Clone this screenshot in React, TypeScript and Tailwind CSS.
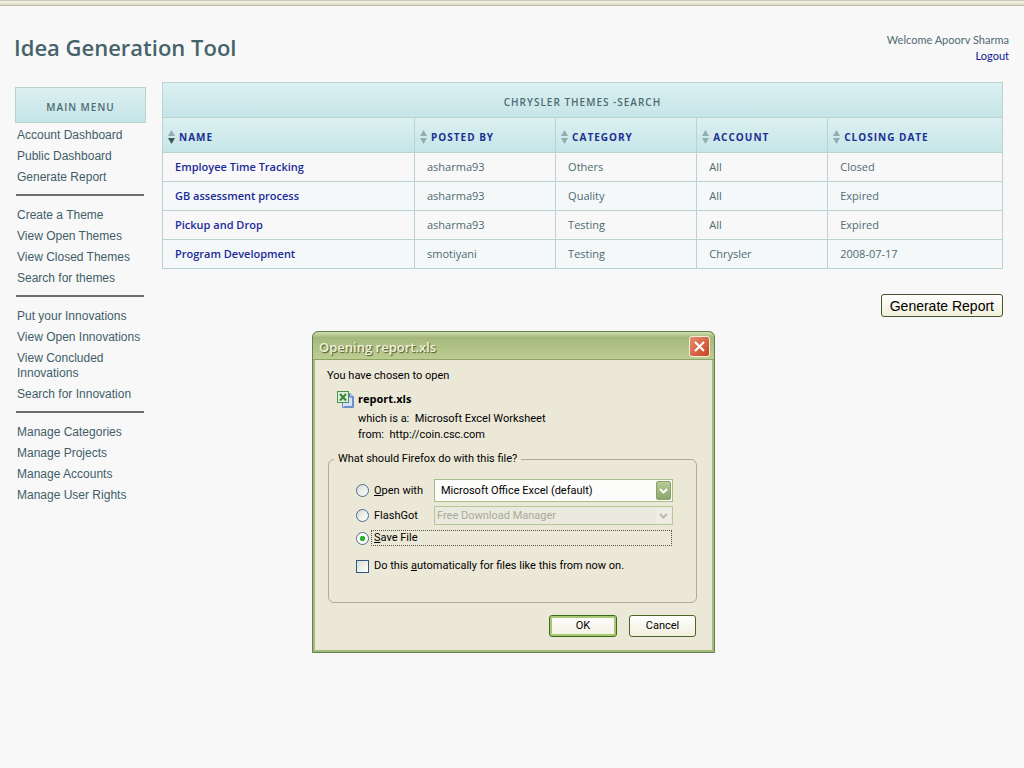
import React from "react";

const menuGroups: string[][] = [
  ["Account Dashboard", "Public Dashboard", "Generate Report"],
  ["Create a Theme", "View Open Themes", "View Closed Themes", "Search for themes"],
  ["Put your Innovations", "View Open Innovations", "View Concluded Innovations", "Search for Innovation"],
  ["Manage Categories", "Manage Projects", "Manage Accounts", "Manage User Rights"],
];

const columns = ["Name", "Posted by", "Category", "Account", "Closing date"];

const rows: string[][] = [
  ["Employee Time Tracking", "asharma93", "Others", "All", "Closed"],
  ["GB assessment process", "asharma93", "Quality", "All", "Expired"],
  ["Pickup and Drop", "asharma93", "Testing", "All", "Expired"],
  ["Program Development", "smotiyani", "Testing", "Chrysler", "2008-07-17"],
];

function SortIcon({ active }: { active: boolean }) {
  return (
    <svg width="7" height="14" viewBox="0 0 7 14" aria-hidden="true" className="shrink-0">
      <path d="M3.5 0 L7 6 H0 Z" fill="#93aeb0" />
      <path d="M0 8 H7 L3.5 14 Z" fill={active ? "#3f5555" : "#93aeb0"} />
    </svg>
  );
}

function Sidebar() {
  return (
    <nav className="mt-[5px] w-[131px] shrink-0 font-['Liberation_Sans',sans-serif]">
      <h2 className="mb-0.5 flex h-9 items-center justify-center border border-[#b5d3d3] bg-linear-to-b from-[#dcf0f1] to-[#c5e5e8] pt-1 font-['Open_Sans',sans-serif] text-[10px] leading-4 font-semibold tracking-widest text-[#4f6b72] uppercase">
        Main menu
      </h2>
      {menuGroups.map((group, i) => (
        <React.Fragment key={group[0]}>
          {i > 0 && <hr className="mt-1.5 mr-0.5 mb-[9px] ml-px border-0 border-t-2 border-[#6c6c72]" />}
          <ul>
            {group.map((item) => (
              <li key={item} className="px-0.5 py-[3px] text-xs leading-[15px] text-[#425d68]">
                <a href="#">{item}</a>
              </li>
            ))}
          </ul>
        </React.Fragment>
      ))}
    </nav>
  );
}

function ThemesTable() {
  return (
    <table className="w-full table-fixed border-collapse text-[11px] leading-4 text-[#4f6b72]">
      <colgroup>
        <col className="w-[30%]" />
        <col className="w-[16.8%]" />
        <col className="w-[16.8%]" />
        <col className="w-[15.6%]" />
        <col className="w-[20.8%]" />
      </colgroup>
      <thead className="text-[10px] tracking-widest uppercase">
        <tr className="h-[35px] bg-linear-to-b from-[#dcf0f1] to-[#c5e5e8]">
          <th colSpan={5} className="border border-[#b9d3d3] pt-1 text-center font-semibold">
            Chrysler Themes -Search
          </th>
        </tr>
        <tr className="h-[35px] bg-linear-to-b from-[#dcf0f1] to-[#c5e5e8]">
          {columns.map((name, i) => (
            <th key={name} className="border border-[#b9d3d3] px-[5px] pt-[3px] text-left">
              <button type="button" className="flex items-center gap-1 font-bold tracking-widest text-[#1b2f92] uppercase">
                <SortIcon active={i === 0} />
                {name}
              </button>
            </th>
          ))}
        </tr>
      </thead>
      <tbody>
        {rows.map((row) => (
          <tr key={row[0]} className="h-[29px] even:bg-[#f4f8f9]">
            {row.map((cell, i) => (
              <td key={i} className="border border-[#b9d3d3] px-3">
                {i === 0 ? (
                  <a href="#" className="font-semibold text-[#1a2a98]">{cell}</a>
                ) : (
                  cell
                )}
              </td>
            ))}
          </tr>
        ))}
      </tbody>
    </table>
  );
}

function ExcelIcon() {
  return (
    <svg width="17" height="17" viewBox="0 0 17 17" aria-hidden="true">
      <path d="M5.5 2.5 H13 L16.500 6 V16.500 H5.500 Z" fill="#d3e1fa" stroke="#6e8cc4" />
      <path d="M15.500 6 V15.500 H7" fill="none" stroke="#6f90d0" strokeWidth="1" />
      <path d="M12.500 2.500 V6 H16.500" fill="#a9c1ea" stroke="#5578bd" />
      <rect x="0.500" y="0.500" width="11" height="11" fill="#e0efd9" stroke="#4f9151" />
      <path d="M3 3 L9 9.500 M9 3 L3 9.500" stroke="#3d8441" strokeWidth="2" />
    </svg>
  );
}

const radioClass =
  "size-[13px] shrink-0 appearance-none rounded-full border border-[#4a6f92] bg-linear-to-br from-[#dcdcd5] to-white checked:bg-radial checked:from-[#2cb52c] checked:from-30% checked:to-white checked:to-40%";

function SaveDialog() {
  return (
    <section
      role="dialog"
      aria-labelledby="dialog-title"
      className="absolute top-[331px] left-1/2 flex w-[403px] -translate-x-[200px] flex-col rounded-t-md border border-[#64824d] bg-[#a4bb7c] px-[2px] pb-[2px] font-[Roboto,sans-serif] text-[11px] leading-4 text-black"
    >
      <header className="-mx-[2px] flex h-7 items-center justify-between rounded-t-md border-b border-[#8ba468] bg-linear-to-b from-[#d3dfb0] via-[#a5b87c] via-20% to-[#bdcd92] pt-0.5 pr-1 pl-1.5">
        <h2
          id="dialog-title"
          className="font-['Open_Sans',sans-serif] text-[13px] leading-5 font-semibold text-[#eff2dc] [text-shadow:1px_1px_1px_#4b5a30]"
        >
          Opening report.xls
        </h2>
        <button
          type="button"
          aria-label="Close"
          className="grid size-[21px] place-items-center rounded-[3px] border border-[#f6efe0] bg-linear-to-br from-[#e58d6c] to-[#c8401f]"
        >
          <svg width="13" height="13" viewBox="0 0 13 13" aria-hidden="true">
            <path d="M2 2 L11 11 M11 2 L2 11" stroke="#fff" strokeWidth="2" />
          </svg>
        </button>
      </header>

      <form className="bg-[#ebe8d7] px-3 pt-2 pb-[13px]" onSubmit={(e) => e.preventDefault()}>
        <p>You have chosen to open</p>
        <div className="flex gap-1 pt-[7px] pl-[10px]">
          <ExcelIcon />
          <div>
            <p className="font-['Open_Sans',sans-serif] font-bold">report.xls</p>
            <p className="mt-1">
              which is a:&nbsp; Microsoft Excel Worksheet
            </p>
            <p>
              from:&nbsp; http://coin.csc.com
            </p>
          </div>
        </div>

        <fieldset className="mt-2 mr-[3px] ml-px h-[152px] rounded-md border border-[#aeab9b] pl-[27px]">
          <legend className="-ml-[22px] px-1">What should Firefox do with this file?</legend>
          <div className="mt-3 flex h-[23px] items-center">
            <input id="open-with" type="radio" name="action" className={radioClass} />
            <label htmlFor="open-with" className="ml-[5px] w-[60px]">
              <u>O</u>pen with
            </label>
            <div className="relative w-[239px]">
              <select
                aria-label="Application"
                className="block h-[23px] w-full appearance-none border border-[#a9bd87] bg-[#fcfcfa] pl-1.5"
              >
                <option>Microsoft Office Excel (default)</option>
              </select>
              <span className="pointer-events-none absolute top-0.5 right-0.5 grid h-[19px] w-[15px] place-items-center rounded-[2px] border border-[#8ba06a] bg-linear-to-b from-[#b9cb95] to-[#8ba56b]">
                <svg width="9" height="6" viewBox="0 0 9 6" aria-hidden="true">
                  <path d="M1 1 L4.500 4.500 L8 1" fill="none" stroke="#fff" strokeWidth="2" />
                </svg>
              </span>
            </div>
          </div>
          <div className="mt-1 flex h-[19px] items-center">
            <input id="flashgot" type="radio" name="action" className={radioClass} />
            <label htmlFor="flashgot" className="ml-[5px] w-[60px]">FlashGot</label>
            <div className="relative w-[239px]">
              <select
                disabled
                aria-label="Download manager"
                className="block h-[19px] w-full appearance-none border border-[#b5c896] bg-[#e9e9dd] pl-0.5 text-[#a9a99a] opacity-100"
              >
                <option>Free Download Manager</option>
              </select>
              <span className="pointer-events-none absolute top-0.5 right-0.5 grid h-[15px] w-[15px] place-items-center bg-[#eeeee4]">
                <svg width="9" height="6" viewBox="0 0 9 6" aria-hidden="true">
                  <path d="M1 1 L4.500 4.500 L8 1" fill="none" stroke="#b9b9a9" strokeWidth="2" />
                </svg>
              </span>
            </div>
          </div>
          <div className="mt-[5px] flex h-4 items-center">
            <input id="save-file" type="radio" name="action" defaultChecked className={radioClass} />
            <label
              htmlFor="save-file"
              className="ml-0.5 flex h-4 w-[301px] items-center border border-dotted border-[#55554c] pl-0.5"
            >
              <u>S</u>ave File
            </label>
          </div>
          <div className="mt-3 flex h-4 items-center">
            <input
              id="automatic"
              type="checkbox"
              className="size-[13px] shrink-0 appearance-none border border-[#31597d] bg-linear-to-br from-[#dcdcd5] to-white"
            />
            <label htmlFor="automatic" className="ml-[5px]">
              Do this <u>a</u>utomatically for files like this from now on.
            </label>
          </div>
        </fieldset>

        <div className="mt-3 mr-1 flex justify-end gap-3">
          <button
            type="submit"
            className="h-[22px] w-[68px] rounded-[3px] border border-[#3c6a1d] bg-linear-to-b from-white to-[#f3f1e2] inset-ring-2 inset-ring-[#a9c872]"
          >
            OK
          </button>
          <button
            type="button"
            className="h-[22px] w-[67px] rounded-[3px] border border-[#4b6529] bg-linear-to-b from-white to-[#f1efdd]"
          >
            Cancel
          </button>
        </div>
      </form>
    </section>
  );
}

export default function App() {
  return (
    <div className="relative min-h-screen bg-[#f8f8f8] font-['Open_Sans',sans-serif] text-[#4f6b72]">
      <div className="h-1.5 border-t border-b border-t-[#c9c5b2] border-b-[#c2bda5] bg-linear-to-b from-[#f6f4ea] to-[#dedac6]" />
      <header className="flex items-start justify-between pt-[26px] pr-[15px] pl-3.5">
        <h1 className="text-[22px] leading-[30px] font-semibold text-[#46636a]">Idea Generation Tool</h1>
        <div className="text-right font-[Lato,sans-serif] text-[11px] leading-4">
          <p>Welcome Apoorv Sharma</p>
          <a href="#" className="text-[#10188f]">Logout</a>
        </div>
      </header>
      <div className="flex items-start gap-4 pt-[18px] pr-[21px] pl-[15px]">
        <Sidebar />
        <main className="flex min-w-0 grow flex-col items-end">
          <ThemesTable />
          <button
            type="button"
            className="mt-[25px] h-[23px] rounded-[3px] border border-[#46562a] bg-linear-to-b from-white to-[#f1efda] px-2 font-['Liberation_Sans',sans-serif] text-sm leading-5 text-black"
          >
            Generate Report
          </button>
        </main>
      </div>
      <SaveDialog />
    </div>
  );
}
